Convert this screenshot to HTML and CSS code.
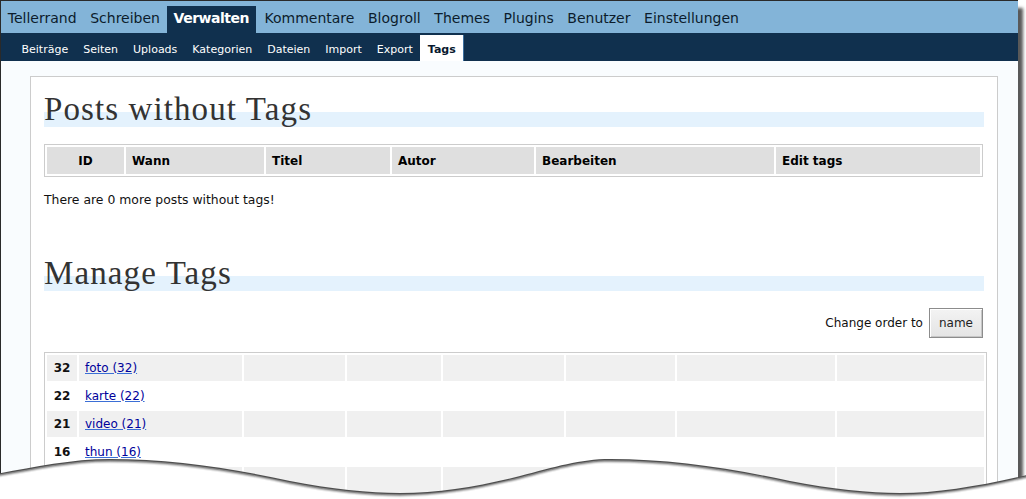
FILE: index.html
```html
<!DOCTYPE html>
<html lang="de">
<head>
<meta charset="utf-8">
<title>Tags verwalten</title>
<link rel="stylesheet" href="styles.css">
</head>
<body>
<div class="frame">
  <nav class="menu">
    <a>Tellerrand</a>
    <a>Schreiben</a>
    <a class="current">Verwalten</a>
    <a>Kommentare</a>
    <a>Blogroll</a>
    <a>Themes</a>
    <a>Plugins</a>
    <a>Benutzer</a>
    <a>Einstellungen</a>
  </nav>
  <nav class="submenu">
    <a>Beiträge</a>
    <a>Seiten</a>
    <a>Uploads</a>
    <a>Kategorien</a>
    <a>Dateien</a>
    <a>Import</a>
    <a>Export</a>
    <a class="current">Tags</a>
  </nav>
  <div class="page">
    <div class="wrap">
      <h2>Posts without Tags</h2>
      <table class="grid posts">
        <colgroup>
          <col class="c-id"><col class="c-wann"><col class="c-titel"><col class="c-autor"><col class="c-edit"><col class="c-tags">
        </colgroup>
        <thead>
          <tr>
            <th class="center">ID</th>
            <th>Wann</th>
            <th>Titel</th>
            <th>Autor</th>
            <th>Bearbeiten</th>
            <th>Edit tags</th>
          </tr>
        </thead>
      </table>
      <p class="note">There are 0 more posts without tags!</p>
      <h2 class="second">Manage Tags</h2>
      <div class="order">
        <span>Change order to</span>
        <button class="btn" type="button">name</button>
      </div>
      <table class="grid tags">
        <colgroup>
          <col class="t1"><col class="t2"><col class="t3"><col class="t4"><col class="t5"><col class="t6"><col class="t7"><col class="t8">
        </colgroup>
        <tbody>
          <tr class="alt"><td class="num">32</td><td><a href="#">foto (32)</a></td><td></td><td></td><td></td><td></td><td></td><td></td></tr>
          <tr><td class="num">22</td><td><a href="#">karte (22)</a></td><td></td><td></td><td></td><td></td><td></td><td></td></tr>
          <tr class="alt"><td class="num">21</td><td><a href="#">video (21)</a></td><td></td><td></td><td></td><td></td><td></td><td></td></tr>
          <tr><td class="num">16</td><td><a href="#">thun (16)</a></td><td></td><td></td><td></td><td></td><td></td><td></td></tr>
          <tr class="alt"><td class="num">15</td><td><a href="#">bern (15)</a></td><td></td><td></td><td></td><td></td><td></td><td></td></tr>
        </tbody>
      </table>
    </div>
  </div>
</div>
<svg class="tear" width="1026" height="50" viewBox="0 0 1026 50" aria-hidden="true">
  <defs>
    <path id="edge" d="M-5,20 C30,14 70,5 110,5 C170,5 230,14 290,27 C330,35 370,39 400,39 C440,39 480,32 520,22 C555,13 580,5 610,5 C670,5 730,14 790,27 C830,35 870,39 900,39 C940,39 985,31 1035,19 L1035,60 L-5,60 Z"/>
  </defs>
  <use href="#edge" fill="#4f4f4f"/>
  <use href="#edge" fill="#8c8c8c" transform="translate(0,1.2)"/>
  <use href="#edge" fill="#c4c4c4" transform="translate(0,2.4)"/>
  <use href="#edge" fill="#ececec" transform="translate(0,3.4)"/>
  <use href="#edge" fill="#ffffff" transform="translate(0,4.4)"/>
</svg>
</body>
</html>
```

FILE: styles.css
```css
html, body {
  margin: 0;
  padding: 0;
}

body {
  width: 1026px;
  height: 499px;
  overflow: hidden;
  background: #ffffff;
  position: relative;
  font-family: "DejaVu Sans", Verdana, sans-serif;
  color: #111;
}

.frame {
  width: 1017px;
  height: 560px;
  border-left: 1px solid #2a2a2a;
  border-top: 1px solid #2a2a2a;
  background: #f9fcfe;
  box-shadow: 5px 8px 3px rgba(60, 60, 60, 0.85);
}

/* main menu */
.menu {
  display: flex;
  align-items: flex-end;
  height: 32px;
  background: #83b4d8;
}

.menu a {
  display: block;
  padding: 0 6.8px 3px;
  line-height: 24px;
  font-size: 14px;
  color: #0c1c2c;
}

.menu a.current {
  background: #10304e;
  color: #ffffff;
  font-weight: bold;
  letter-spacing: -0.5px;
  margin-right: 2px;
}

/* sub menu */
.submenu {
  display: flex;
  align-items: flex-end;
  height: 28px;
  padding-left: 13px;
  background: #10304e;
}

.submenu a {
  display: block;
  height: 26px;
  box-sizing: border-box;
  padding: 7px 7.5px 0;
  line-height: 16px;
  font-size: 11px;
  color: #ffffff;
}

.submenu a.current {
  background: #ffffff;
  color: #08182e;
  font-weight: bold;
  border-right: 1px solid #3d6f9f;
}

/* content */
.page {
  padding: 15px 20px 0 29px;
}

.wrap {
  background: #ffffff;
  border: 1px solid #cccccc;
  padding: 14px 13px 40px;
}

h2 {
  margin: 0;
  height: 36px;
  line-height: 36px;
  font-family: "Liberation Serif", "Times New Roman", serif;
  font-size: 33px;
  font-weight: normal;
  letter-spacing: 1.1px;
  color: #333333;
  background: linear-gradient(#e4f2fd, #e4f2fd) no-repeat left bottom / 100% 15px;
}

h2.second {
  margin-top: 47px;
}

.grid {
  table-layout: fixed;
  border: 1px solid #cccccc;
  border-spacing: 2px;
  font-size: 12px;
}

.posts {
  width: 939px;
  margin-top: 17px;
}

.posts th {
  height: 27px;
  padding: 0 6px;
  background: #dfdfdf;
  text-align: left;
  font-weight: bold;
  color: #000;
}

.posts th.center {
  text-align: center;
}

.c-id { width: 77px; }
.c-wann { width: 138px; }
.c-titel { width: 124px; }
.c-autor { width: 142px; }
.c-edit { width: 238px; }
.c-tags { width: 204px; }

.note {
  margin: 15px 0 0;
  font-size: 12.4px;
  line-height: 16px;
}

.order {
  display: flex;
  justify-content: flex-end;
  align-items: center;
  gap: 6px;
  margin-top: 17px;
  font-size: 12px;
}

.btn {
  height: 30px;
  padding: 0 9px;
  margin-right: 1px;
  font-family: "DejaVu Sans", Verdana, sans-serif;
  font-size: 12px;
  color: #222;
  background: linear-gradient(#f3f3f3, #e4e4e4);
  border: 1px solid #8c8c8c;
  box-shadow: inset 1px 1px 0 #ffffff, inset -1px -1px 0 #c6c6c6;
  border-radius: 0;
}

.tags {
  width: 943px;
  margin-top: 14px;
}

.tags td {
  height: 26px;
  padding: 0 6px;
}

.tags tr.alt td {
  background: #f0f0f0;
}

.tags td.num {
  text-align: center;
  font-weight: bold;
  padding: 0;
}

.tags a {
  color: #00019b;
  text-decoration: underline;
  text-decoration-color: #3b6fd6;
}

.t1 { width: 30px; }
.t2 { width: 163px; }
.t3 { width: 101px; }
.t4 { width: 94px; }
.t5 { width: 121px; }
.t6 { width: 109px; }
.t7 { width: 158px; }
.t8 { width: 147px; }

/* torn bottom edge of the screenshot */
.tear {
  position: absolute;
  left: 0;
  top: 454px;
  display: block;
}
```
